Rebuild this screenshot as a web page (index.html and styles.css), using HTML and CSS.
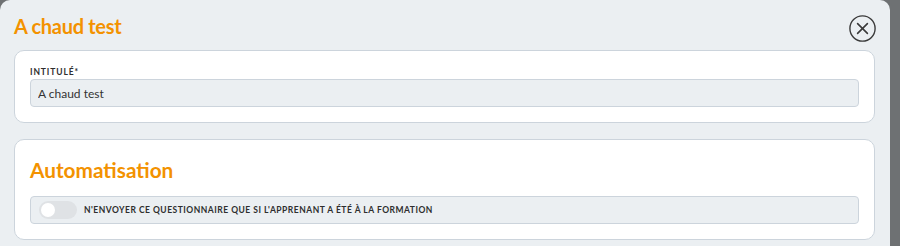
FILE: index.html
```html
<!DOCTYPE html>
<html lang="fr">
<head>
    <meta charset="UTF-8">
    <title>A chaud test</title>
    <link rel="stylesheet" href="styles.css">
</head>
<body>
    <div class="modal">
        <div class="modal-header">
            <h2 class="modal-title">A chaud test</h2>
            <button class="close-btn" aria-label="Fermer">
                <svg width="27" height="27" viewBox="0 0 27 27">
                    <circle cx="13.5" cy="13.5" r="12.6" fill="none" stroke="#3a3a3a" stroke-width="1.4"/>
                    <path d="M8.6 8.6 L18.4 18.4 M18.4 8.6 L8.6 18.4" stroke="#3a3a3a" stroke-width="1.6" stroke-linecap="round"/>
                </svg>
            </button>
        </div>
        <div class="card">
            <label class="field-label" for="titleInput">Intitulé*</label>
            <input class="field-input" id="titleInput" type="text" value="A chaud test">
        </div>
        <div class="card card-auto">
            <h3 class="section-title">Automatisation</h3>
            <div class="toggle-row">
                <span class="toggle"><span class="knob"></span></span>
                <span class="toggle-label">N'envoyer ce questionnaire que si l'apprenant a été à la formation</span>
            </div>
        </div>
    </div>
</body>
</html>
```

FILE: styles.css
```css
:root {
    --panel-bg: #ebeff2;
    --border: #ccd4dc;
    --orange: #f39200;
    --text: #333333;
}
html, body {
    margin: 0;
    padding: 0;
}
body {
    font-family: Lato, 'Open Sans', sans-serif;
    background: #6e7173;
    color: var(--text);
    height: 246px;
    overflow: hidden;
}
.modal {
    width: 890px;
    height: 246px;
    overflow: hidden;
    background: var(--panel-bg);
    border-radius: 10px 10px 0 0;
    padding: 0 15px 0 14px;
    box-sizing: border-box;
}
.modal-header {
    display: flex;
    justify-content: space-between;
    align-items: center;
    height: 50px;
}
.modal-title {
    margin: 0;
    color: var(--orange);
    font-size: 20px;
    font-weight: 700;
    letter-spacing: -0.3px;
    padding-top: 2px;
}
.close-btn {
    background: none;
    border: none;
    padding: 0;
    margin-right: -1px;
    margin-top: 7px;
    width: 27px;
    height: 27px;
    cursor: pointer;
}
.card {
    background: #ffffff;
    border: 1px solid var(--border);
    border-radius: 10px;
    padding: 14px 15px 15px 15px;
    display: flex;
    flex-direction: column;
}
.card-auto {
    margin-top: 16px;
    padding-top: 17px;
}
.field-label {
    font-size: 8.5px;
    font-weight: 700;
    text-transform: uppercase;
    letter-spacing: 0.9px;
    color: #2e2e2e;
    line-height: 14px;
}
.field-input {
    height: 28px;
    box-sizing: border-box;
    background: var(--panel-bg);
    border: 1px solid var(--border);
    border-radius: 4px;
    padding: 0 7px;
    font-family: inherit;
    font-size: 12px;
    color: var(--text);
    outline: none;
}
.section-title {
    margin: 0 0 13px 0;
    color: var(--orange);
    font-size: 20.8px;
    font-weight: 700;
    letter-spacing: 0;
    line-height: 26px;
}
.toggle-row {
    display: flex;
    align-items: center;
    gap: 7px;
    height: 28px;
    box-sizing: border-box;
    background: var(--panel-bg);
    border: 1px solid var(--border);
    border-radius: 4px;
    padding: 0 8px;
}
.toggle {
    display: flex;
    align-items: center;
    width: 38px;
    height: 18px;
    border-radius: 9px;
    background: #dfe2e5;
    padding: 2px;
    box-sizing: border-box;
}
.knob {
    width: 14px;
    height: 14px;
    border-radius: 50%;
    background: #ffffff;
}
.toggle-label {
    font-size: 8.5px;
    font-weight: 700;
    text-transform: uppercase;
    letter-spacing: 0.5px;
    color: #2e2e2e;
}
```
